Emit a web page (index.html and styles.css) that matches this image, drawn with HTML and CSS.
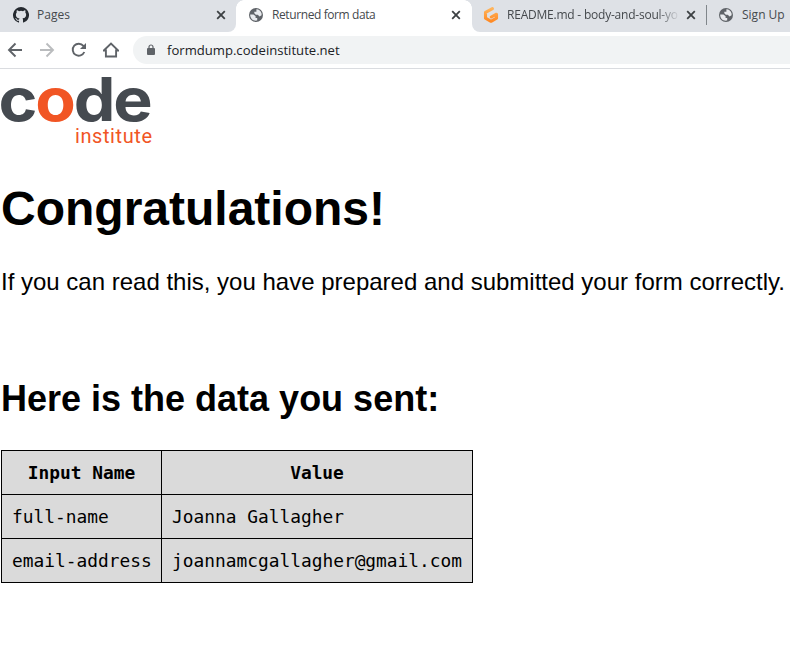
FILE: index.html
```html
<!DOCTYPE html>
<html lang="en">
<head>
<meta charset="utf-8">
<title>Returned form data</title>
<link rel="stylesheet" href="styles.css">
</head>
<body>
<svg class="defs" width="0" height="0">
  <symbol id="globe" viewBox="0 0 16 16">
    <circle cx="8" cy="8" r="7" fill="#5f6368"/>
    <path class="land" d="M2.200 7.400H5.500L7.600 9.200V11H9.200V13.500C5 14.300 2 11.300 2.200 7.400ZM8.400 2.300C11 2.400 13 4 13.600 6.500V8.300L11.500 9.500 9.800 7.700H7.800L6.300 6.200V4.800H8.400Z"/>
  </symbol>
  <symbol id="close" viewBox="0 0 10 10"><path d="m1.2 1.2 7.6 7.6m0-7.6L1.2 8.800" stroke="#3c4043" stroke-width="1.8"/></symbol>
</svg>
<header>
  <div class="tabs">
    <div class="tab pages">
      <svg class="icon" viewBox="0 0 16 16"><path fill="#24292f" d="M8 0a8 8 0 0 0-2.53 15.59c.4.07.55-.17.55-.38v-1.49c-2.23.48-2.7-.95-2.7-.95-.36-.92-.89-1.17-.89-1.17-.73-.5.06-.49.06-.49.8.06 1.23.83 1.23.83.72 1.22 1.87.87 2.33.66.07-.52.28-.87.51-1.07-1.78-.2-3.64-.89-3.64-3.95 0-.87.31-1.59.82-2.15-.08-.2-.36-1.02.08-2.12 0 0 .67-.21 2.2.82a7.7 7.7 0 0 1 4 0c1.53-1.03 2.2-.82 2.2-.82.44 1.1.16 1.92.08 2.12.51.56.82 1.28.82 2.15 0 3.07-1.87 3.75-3.65 3.95.29.25.54.73.54 1.48v2.2c0 .21.15.46.55.38A8 8 0 0 0 8 0Z"/></svg>
      <span class="title">Pages</span><svg class="close"><use href="#close"/></svg>
    </div>
    <div class="tab active">
      <svg class="icon"><use href="#globe"/></svg>
      <span class="title">Returned form data</span><svg class="close"><use href="#close"/></svg>
    </div>
    <div class="tab readme">
      <svg class="icon" viewBox="0 0 16 16"><defs><linearGradient id="orange" x2="0" y2="1"><stop stop-color="#ffb45b"/><stop offset="1" stop-color="#ff8a24"/></linearGradient></defs><path d="M9.400 1.700 2.500 5.300V11.200L8 14.300 13.500 11.200V7.200L8.300 10" fill="none" stroke="url(#orange)" stroke-width="3.100" stroke-linejoin="round" stroke-linecap="round"/></svg>
      <span class="title fade">README.md - body-and-soul-yo</span><svg class="close"><use href="#close"/></svg>
    </div>
    <div class="tab signup">
      <svg class="icon"><use href="#globe"/></svg>
      <span class="title">Sign Up</span>
    </div>
  </div>
  <div class="toolbar">
    <svg viewBox="0 0 16 16"><path d="M15 8H2m6.5-6.5L2 8l6.5 6.5"/></svg>
    <svg class="muted" viewBox="0 0 16 16"><path d="M1 8h13M7.5 1.5 14 8l-6.500 6.500"/></svg>
    <svg viewBox="0 0 16 16"><path d="M13.3 10A6 6 0 1 1 12.400 3.900L14 5.500"/><path class="solid" d="M15 1v6H9Z"/></svg>
    <svg viewBox="0 0 16 16"><path d="M.8 8.500 8 1.600l7.200 6.900h-2.100v6H2.900v-6Z"/></svg>
    <div class="address">
      <svg class="lock" viewBox="0 0 8 12"><path d="M2 5V3a2 2 0 0 1 4 0v2" fill="none" stroke="#5f6368" stroke-width="1.200"/><rect y="4" width="8" height="7" rx="1" fill="#5f6368"/></svg>
      <span>formdump.codeinstitute.net</span>
    </div>
  </div>
</header>
<main>
  <svg class="logo" viewBox="0 0 154 78" role="img" aria-label="code institute">
    <text class="code" x="-1.500" y="52" textLength="152" lengthAdjust="spacingAndGlyphs">c<tspan class="o">o</tspan>de</text>
    <text class="institute" x="75" y="74" textLength="77">institute</text>
  </svg>
  <h1>Congratulations!</h1>
  <p>If you can read this, you have prepared and submitted your form correctly.</p>
  <h2>Here is the data you sent:</h2>
  <table>
    <tr><th>Input Name</th><th>Value</th></tr>
    <tr><td>full-name</td><td>Joanna Gallagher</td></tr>
    <tr><td>email-address</td><td>joannamcgallagher@gmail.com</td></tr>
  </table>
</main>
</body>
</html>
```
FILE: styles.css
```css
* { box-sizing: border-box; }
body { margin: 0; background: #fff; color: #000; font-family: "Liberation Sans", Arial, sans-serif; overflow: hidden; }
svg { display: block; flex: none; }
.defs { position: absolute; }
header { height: 69px; border-bottom: 1px solid #dadce0; font-family: "Open Sans", sans-serif; }
.tabs { display: flex; height: 32px; background: #fff; color: #45494d; font-size: 12px; overflow: hidden; }
.tab { display: flex; align-items: center; height: 32px; padding-bottom: 2px; background: #dee1e6; white-space: nowrap; flex: none; }
.pages { width: 236px; padding-left: 13px; border-bottom-right-radius: 8px; }
.active { width: 236px; padding-left: 12px; background: #fff; position: relative; }
.active::before, .active::after { content: ""; position: absolute; top: 0; width: 8px; height: 8px; }
.active::before { left: 0; background: radial-gradient(circle at 100% 100%, #fff 7.5px, #dee1e6 8px); }
.active::after { right: 0; background: radial-gradient(circle at 0 100%, #fff 7.5px, #dee1e6 8px); }
.readme { width: 234px; padding-left: 11px; border-bottom-left-radius: 8px; }
.signup { width: 84px; padding-left: 12px; position: relative; }
.signup::before { content: ""; position: absolute; left: 0; top: 5px; width: 1px; height: 20px; background: #80868b; }
.icon { width: 16px; height: 16px; }
.land { fill: #e8eaed; }
.title { margin-left: 8px; flex: 1; min-width: 0; overflow: hidden; line-height: 20px; }
.close { width: 10px; height: 10px; margin-right: 10px; }
.active .title { letter-spacing: -.4px; }
.active .close { margin-right: 11px; }
.fade { flex: 0 0 174px; margin-right: 5px; letter-spacing: -.22px; -webkit-mask-image: linear-gradient(90deg, #000 150px, transparent 173px); mask-image: linear-gradient(90deg, #000 150px, transparent 173px); }
.toolbar { display: flex; align-items: center; gap: 16px; height: 36px; padding-left: 7px; }
.toolbar > svg { width: 16px; height: 16px; fill: none; stroke: #5f6368; stroke-width: 1.9; }
.toolbar > .muted { stroke: #babcbe; }
.toolbar .solid { fill: #5f6368; stroke: none; }
.address { display: flex; align-items: center; flex: 1; height: 28px; margin-left: -2px; padding-left: 14px; border-radius: 14px 0 0 14px; background: #f1f3f4; font-size: 13.1px; color: #202124; }
.lock { width: 8px; height: 12px; margin-right: 12px; }
main { padding: 0 1px; }
.logo { width: 154px; height: 78px; margin-left: -1px; overflow: visible; }
.code { font: 700 60px Inter, sans-serif; letter-spacing: -2px; fill: #454a50; }
.code .o, .institute { fill: #f15524; }
.institute { font: 400 20px Roboto, sans-serif; }
h1 { margin: 34px 0 0; font-size: 48px; line-height: 56px; }
p { margin: 31px 0 0; font-size: 24px; line-height: 28px; white-space: nowrap; }
h2 { margin: 82px 0 0; font-size: 36px; line-height: 42px; }
table { width: 472px; margin-top: 30px; border-collapse: collapse; table-layout: fixed; background: #dadada; font-family: "DejaVu Sans Mono", monospace; font-size: 17.85px; }
th, td { height: 44px; padding: 0 10px; border: 1px solid #000; white-space: nowrap; }
th:first-child { width: 160px; }
```
